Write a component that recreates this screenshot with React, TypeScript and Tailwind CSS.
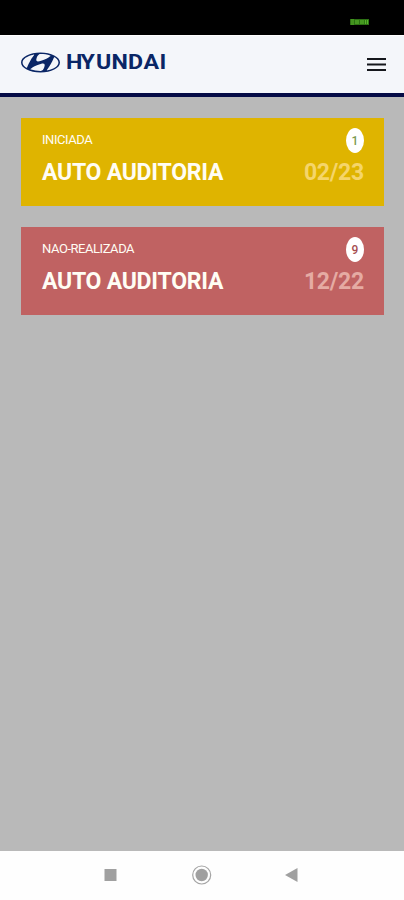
import { SiHyundai } from 'react-icons/si';

const audits = [
  {
    status: 'INICIADA',
    title: 'AUTO AUDITORIA',
    date: '02/23',
    count: 1,
    card: 'bg-[#dfb400]',
    countColor: 'text-[#7d9a50]',
    dateColor: 'text-[#f5d56a]',
  },
  {
    status: 'NAO-REALIZADA',
    title: 'AUTO AUDITORIA',
    date: '12/22',
    count: 9,
    card: 'bg-[#c06262]',
    countColor: 'text-[#a64e50]',
    dateColor: 'text-[#e5aba3]',
  },
];

function StatusBar() {
  return (
    <div className="h-[35px] bg-black flex justify-end pt-[19px] pr-[35px]">
      <svg width="19" height="6" viewBox="0 0 19 6" fill="none">
        <path d="M0 0h19v6H0z" fill="#2c7013" />
        <path
          d="M1 1h3M1 3h3M1 5h3M6 1v4M8 1v4M11 1v4M13 1v4M15.500 1v4M17.500 1v4"
          stroke="#58b52b"
          strokeWidth="1.2"
        />
      </svg>
    </div>
  );
}

function Header() {
  return (
    <header className="h-[62px] bg-[#f4f6fa] border-t border-t-white border-b-4 border-b-[#050b46] flex items-center justify-between pl-[21px] pr-[18px]">
      <div className="flex items-center pb-[5px] text-[#0a2666]">
        <SiHyundai className="w-[39px] h-[39px]" />
        <svg className="ml-[6px] overflow-visible" width="101" height="24" viewBox="0 0 101 24">
          <text
            x="0 12.500 25.800 39.200 53.400 66.800 80.600"
            y="19"
            transform="scale(1.16 1)"
            fill="currentColor"
            className="font-['Roboto',sans-serif] font-bold text-[20px]"
          >
            HYUNDAI
          </text>
        </svg>
      </div>
      <button aria-label="Menu">
        <svg width="19" height="13" viewBox="0 0 19 13" stroke="#15171c" strokeWidth="2">
          <path d="M0 1h19M0 6.500h19M0 12h19" />
        </svg>
      </button>
    </header>
  );
}

function NavBar() {
  return (
    <nav className="h-[49px] bg-[#fefefe] flex justify-center pt-[13px]">
      <svg width="196" height="22" viewBox="0 0 196 22" fill="#a0a0a0">
        <rect x="0.500" y="5" width="12" height="12" />
        <circle cx="97.700" cy="11" r="9" fill="none" stroke="#a5a5a5" strokeWidth="1.200" />
        <circle cx="97.700" cy="11" r="6.200" />
        <path d="M181 11l12.500-7v14z" />
      </svg>
    </nav>
  );
}

export default function App() {
  return (
    <div className="w-full h-screen flex flex-col bg-[#b9b9b9] font-['Roboto',sans-serif]">
      <StatusBar />
      <Header />
      <main className="flex-1 flex flex-col gap-[21px] px-[21px] pt-[21px] pr-5">
        {audits.map((audit) => (
          <div
            key={audit.status}
            className={`${audit.card} h-[88px] px-[21px] pt-[10px] pr-5 text-[#fffdf4]`}
          >
            <div className="flex items-start justify-between h-[31px]">
              <span className="text-[13px] leading-[24px] tracking-[-0.45px]">
                {audit.status}
              </span>
              <span
                className={`w-[18px] h-[25px] rounded-[50%] bg-white flex items-center justify-center text-[12px] font-medium ${audit.countColor}`}
              >
                {audit.count}
              </span>
            </div>
            <div className="flex justify-between text-[23px] leading-[27px] font-bold tracking-[-0.25px]">
              <span>{audit.title}</span>
              <span className={audit.dateColor}>{audit.date}</span>
            </div>
          </div>
        ))}
      </main>
      <NavBar />
    </div>
  );
}
